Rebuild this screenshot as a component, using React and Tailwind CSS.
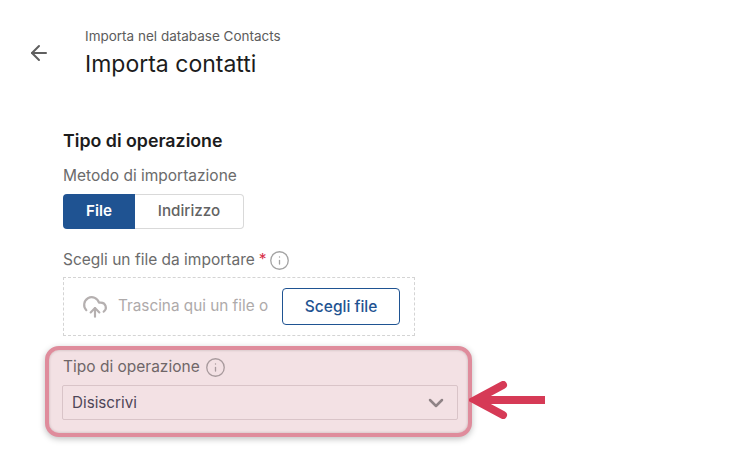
import { ArrowLeft, ChevronDown, CloudUpload, Info } from 'lucide-react'

const App = () => {
  return (
    <div className="w-[753px] h-[460px] bg-white overflow-hidden font-['Inter',sans-serif]">
      {/* Header */}
      <div className="flex pt-[28px] pl-[27px]">
        <ArrowLeft className="w-[24px] h-[24px] mt-[13px] text-[#5f5f5f]" strokeWidth={2} />
        <div className="ml-[34px]">
          <div className="text-[13.5px] leading-[17px] text-[#5c5c5c]">Importa nel database Contacts</div>
          <h1 className="mt-[4px] text-[23px] leading-[30px] font-normal text-[#1c1c1c]">Importa contatti</h1>
        </div>
      </div>

      <div className="pl-[63px] pt-[51px]">
        <h2 className="text-[17.8px] leading-[22px] font-semibold text-[#1c1c1c]">Tipo di operazione</h2>
        <div className="mt-[14px] text-[15.5px] leading-[20px] text-[#6b6b6b]">Metodo di importazione</div>

        {/* File / address toggle */}
        <div className="mt-[8px] flex w-[181px] h-[35px] text-[15.2px]">
          <div className="w-[72px] flex items-center justify-center rounded-l-[4px] bg-[#1f5392] text-white font-semibold">File</div>
          <div className="flex-1 flex items-center justify-center rounded-r-[4px] border border-l-0 border-[#d9d9d9] text-[#636363] font-medium">Indirizzo</div>
        </div>

        <div className="mt-[21px] h-[20px] flex items-center text-[15.5px] leading-[20px] text-[#6b6b6b]">
          Scegli un file da importare
          <span className="ml-[4px] text-[#d8304a]">*</span>
          <Info className="ml-[2px] w-[21px] h-[21px] text-[#a3a3a3]" strokeWidth={1.5} />
        </div>

        {/* Dropzone */}
        <div className="mt-[7px] w-[352px] h-[59px] flex items-center border border-dashed border-[#d4d4d4] pl-[18px]">
          <CloudUpload className="w-[26px] h-[26px] text-[#b5b0b0]" strokeWidth={2} />
          <span className="ml-[10px] text-[15.3px] text-[#aeaaaa]">Trascina qui un file o</span>
          <button className="ml-[14px] w-[118px] h-[37px] rounded-[4px] border border-[#1f5392] text-[15.5px] font-medium text-[#1f5392]">Scegli file</button>
        </div>

        {/* Highlighted field */}
        <div className="mt-[10px] -ml-[18px] flex items-center">
          <div className="w-[427px] h-[91px] rounded-[14px] border-[4px] border-[#df8c9c] bg-[#f3e1e4] shadow-[0_2px_6px_rgba(0,0,0,0.25),inset_0_0_3px_rgba(0,0,0,0.2)] pl-[13px] pr-[10px] pt-[7px]">
            <div className="pl-[1px] h-[20px] flex items-center text-[15.5px] leading-[20px] text-[#6f6668]">
              Tipo di operazione
              <Info className="ml-[5px] w-[21px] h-[21px] text-[#a89a9d]" strokeWidth={1.5} />
            </div>
            <div className="mt-[8px] h-[35px] flex items-center justify-between rounded-[2px] border border-[#d9c4c8] pl-[9px] pr-[9px] text-[15.2px] text-[#4e4658]">
              <span className="mt-[1px]">Disiscrivi</span>
              <ChevronDown className="w-[24px] h-[24px] text-[#8f8386]" strokeWidth={2.5} />
            </div>
          </div>

          {/* Pointer arrow */}
          <svg className="-ml-[3px] mt-[17px]" width="78" height="38" viewBox="0 0 78 38" fill="none">
            <path d="M76 19H6" stroke="#d63a56" strokeWidth="8" />
            <path d="M34 4L6 19L34 34" stroke="#d63a56" strokeWidth="8" strokeLinecap="round" strokeLinejoin="miter" />
          </svg>
        </div>
      </div>
    </div>
  )
}

export default App
